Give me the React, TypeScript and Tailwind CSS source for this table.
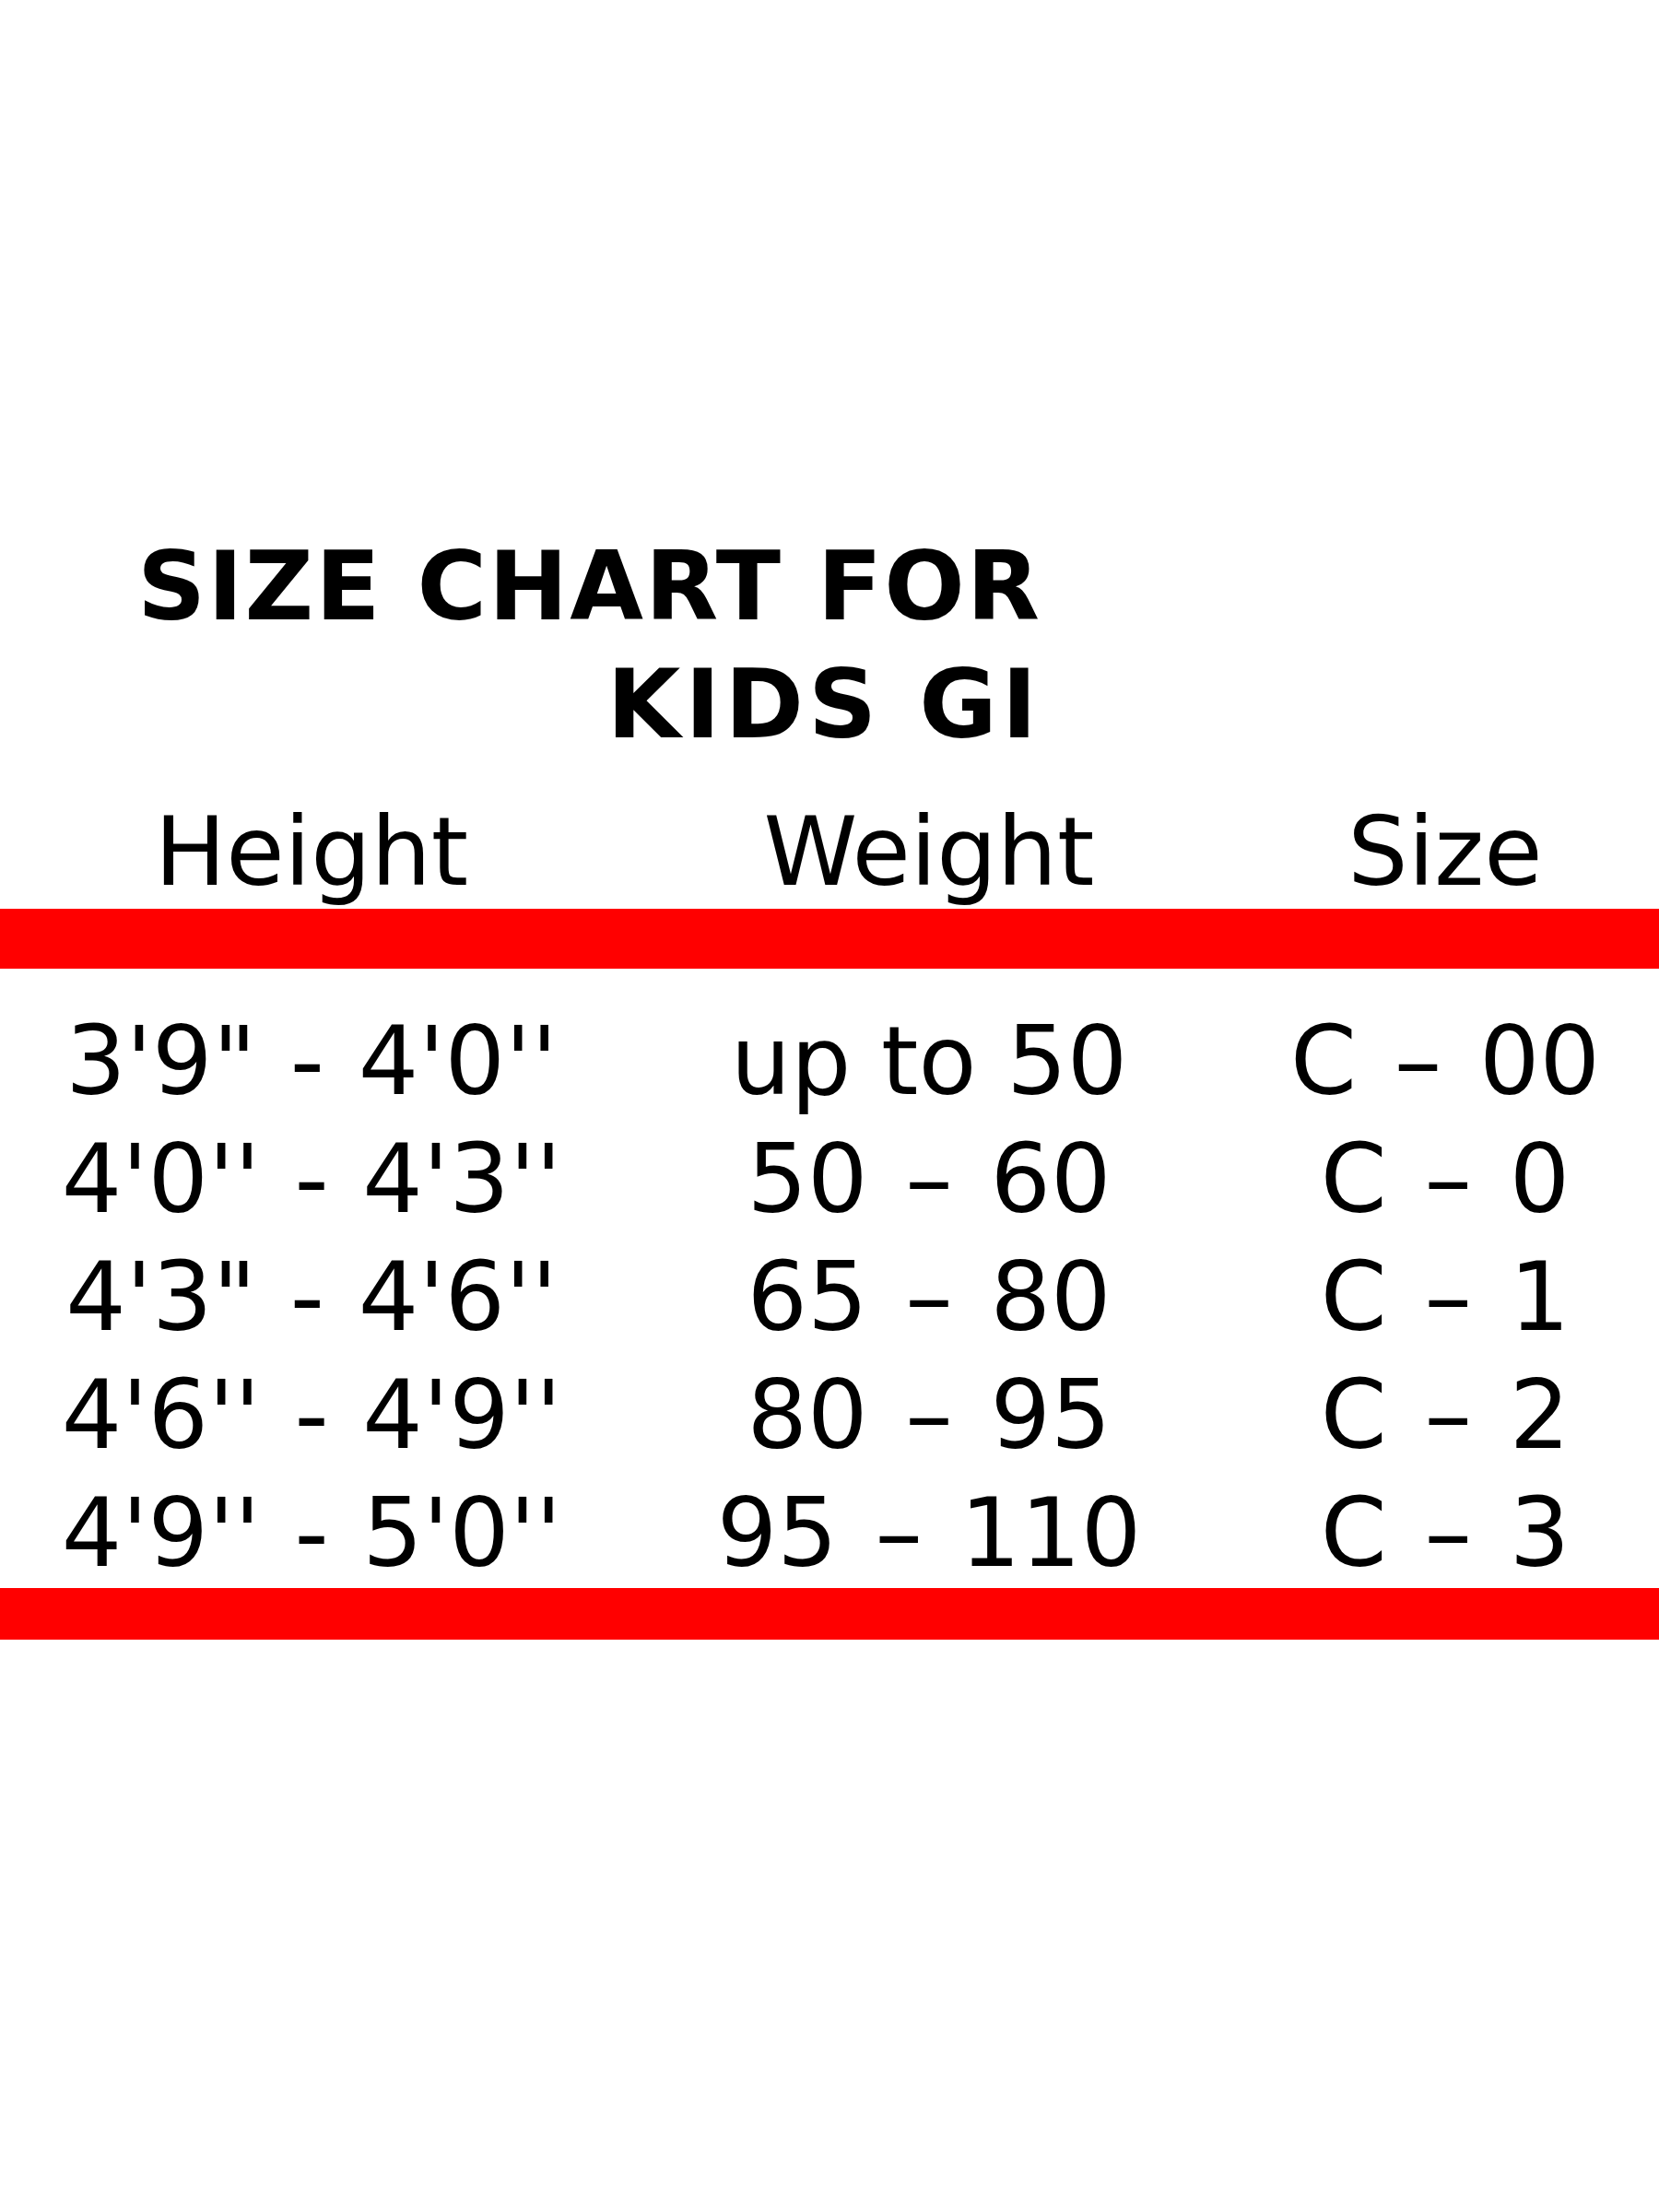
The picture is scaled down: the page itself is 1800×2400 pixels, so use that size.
const rows = [
  { height: [`3'9"`, `4'0''`], weight: 'up to 50', size: ['C', '00'] },
  { height: [`4'0''`, `4'3''`], weight: ['50', '60'], size: ['C', '0'] },
  { height: [`4'3"`, `4'6''`], weight: ['65', '80'], size: ['C', '1'] },
  { height: [`4'6''`, `4'9''`], weight: ['80', '95'], size: ['C', '2'] },
  { height: [`4'9''`, `5'0''`], weight: ['95', '110'], size: ['C', '3'] },
];

// range with a wide en dash, like the original's font
function Range({ parts }: { parts: string[] | string }) {
  if (typeof parts === 'string') return <>{parts}</>;
  return (
    <>
      {parts[0]} <span className="px-[8px]">–</span> {parts[1]}
    </>
  );
}

export default function App() {
  return (
    <div className="w-[1800px] h-[2400px] bg-white text-black font-['DejaVu_Sans',Verdana,sans-serif] pt-[576px]">
      {/* Title, right-aligned block */}
      <div className="w-[1128px] text-right text-[103px] leading-[120px] font-bold flex flex-col gap-y-[8px]">
        <div className="tracking-[2px] mr-[-2px]">SIZE CHART FOR</div>
        <div className="tracking-[5px] mr-[-2px]">KIDS GI</div>
      </div>

      {/* Column headings */}
      <div className="mt-[40px] grid grid-cols-[676px_664px_456px] text-[103px] leading-[120px] text-center">
        <div>Height</div>
        <div>Weight</div>
        <div>Size</div>
      </div>

      <div className="mt-[2px] h-[65px] bg-[#ff0000]" />

      {/* Size rows */}
      <div className="pt-[40px] grid grid-cols-[676px_664px_456px] gap-y-[8px] text-[103px] leading-[120px] text-center">
        {rows.map((r) => (
          <div key={r.size[1]} className="contents">
            <div className="whitespace-pre">
              {r.height[0]} <span className="px-[4px]">-</span> {r.height[1]}
            </div>
            <div className="whitespace-pre">
              <Range parts={r.weight} />
            </div>
            <div className="whitespace-pre">
              <Range parts={r.size} />
            </div>
          </div>
        ))}
      </div>

      <div className="h-[56px] bg-[#ff0000]" />
    </div>
  );
}
